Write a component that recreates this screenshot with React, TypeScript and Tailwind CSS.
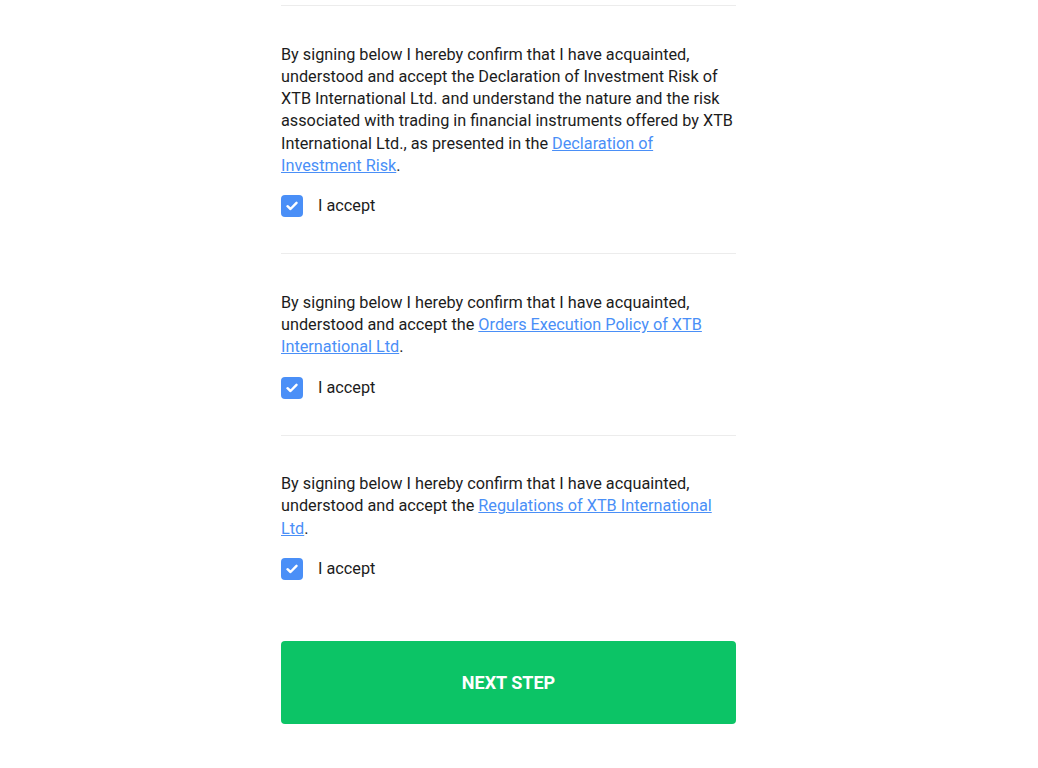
import React, { useState } from "react";

const sections = [
  {
    before:
      "By signing below I hereby confirm that I have acquainted, understood and accept the Declaration of Investment Risk of XTB International Ltd. and understand the nature and the risk associated with trading in financial instruments offered by XTB International Ltd., as presented in the ",
    link: "Declaration of Investment Risk",
  },
  {
    before: "By signing below I hereby confirm that I have acquainted, understood and accept the ",
    link: "Orders Execution Policy of XTB International Ltd",
  },
  {
    before: "By signing below I hereby confirm that I have acquainted, understood and accept the ",
    link: "Regulations of XTB International Ltd",
  },
];

const Check = ({ checked, onClick }: { checked: boolean; onClick: () => void }) => (
  <button
    type="button"
    onClick={onClick}
    className={`flex h-[22px] w-[22px] shrink-0 items-center justify-center rounded-[4px] ${checked ? "bg-[#4a8ff7]" : "border border-gray-300 bg-white"}`}
  >
    {checked && (
      <svg width="12" height="10" viewBox="0 0 12 10" fill="none">
        <path d="M1.5 5.2 4.5 8 10.5 1.8" stroke="white" strokeWidth="2.4" strokeLinecap="round" strokeLinejoin="round" />
      </svg>
    )}
  </button>
);

export default function App() {
  const [accepted, setAccepted] = useState([true, true, true]);

  const toggle = (i: number) => setAccepted((a) => a.map((v, j) => (j === i ? !v : v)));

  return (
    <div className="min-h-[768px] bg-white pt-[5px] font-['Roboto',sans-serif] text-[#1c1c1c]">
      <div className="mx-auto w-[476px] pr-[21px]">
        {sections.map((s, i) => (
          <section key={i} className="border-t border-[#ececec] pt-[37.5px] pb-[36px]">
            <p className="text-[16.25px] leading-[22.3px]">
              {s.before}
              <a href="#" className="text-[#4a8ff7] underline">
                {s.link}
              </a>
              .
            </p>
            <label className="mt-[18px] flex items-center gap-[15px] text-[16.25px] leading-[22px]">
              <Check checked={accepted[i]} onClick={() => toggle(i)} />
              <span>I accept</span>
            </label>
          </section>
        ))}
        <button
          type="button"
          className="mt-[25px] flex h-[83px] w-full items-center justify-center rounded-[4px] bg-[#0cc466] text-[18px] font-bold text-white"
        >
          NEXT STEP
        </button>
      </div>
    </div>
  );
}
